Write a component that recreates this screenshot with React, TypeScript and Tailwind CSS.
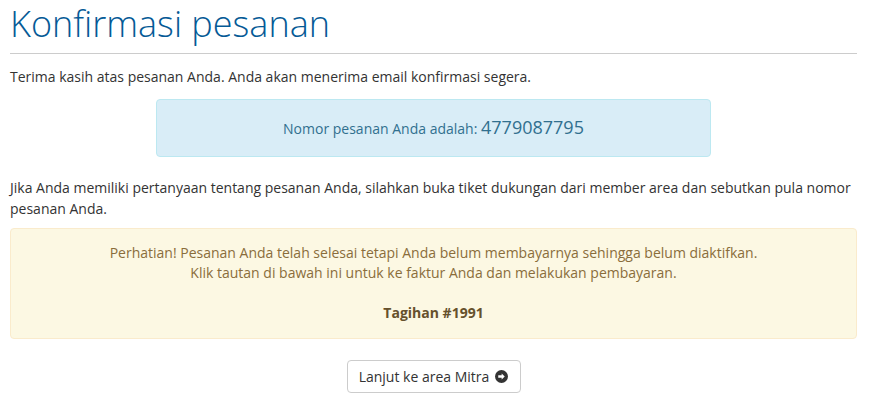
export default function App() {
  const orderNumber = '4779087795'
  const invoiceId = 1991

  return (
    <div className="min-h-screen bg-white pl-[10px] pr-[13px] font-['Open_Sans',sans-serif] text-[14px] text-[#333]">
      <h1 className="mt-[2px] border-b border-[#ccc] pb-[7px] text-[36px] font-[350] leading-[44px] text-[#055a96]">
        Konfirmasi pesanan
      </h1>

      <p className="mt-[13px] leading-[20px]">
        Terima kasih atas pesanan Anda. Anda akan menerima email konfirmasi segera.
      </p>

      <div className="mx-auto mt-[12px] flex h-[58px] w-[555px] items-center justify-center rounded border border-[#bce8f1] bg-[#d9edf7] text-[#31708f]">
        <span className="leading-[20px]">
          Nomor pesanan Anda adalah: <span className="text-[18px]">{orderNumber}</span>
        </span>
      </div>

      <p className="mt-[20px] leading-[21px]">
        Jika Anda memiliki pertanyaan tentang pesanan Anda, silahkan buka tiket dukungan dari member area dan sebutkan pula nomor pesanan Anda.
      </p>

      <div className="mt-[9px] rounded border border-[#faebcc] bg-[#fcf8e3] px-4 pb-[15px] pt-[14px] text-center leading-[20px] text-[#8a6d3b]">
        <p>Perhatian! Pesanan Anda telah selesai tetapi Anda belum membayarnya sehingga belum diaktifkan.</p>
        <p>Klik tautan di bawah ini untuk ke faktur Anda dan melakukan pembayaran.</p>
        <p className="mt-[20px] font-bold text-[#66512c]">Tagihan #{invoiceId}</p>
      </div>

      <div className="mt-[21px] flex justify-center">
        <button className="flex h-[33px] w-[174px] items-center justify-center gap-[6px] rounded border border-[#ccc] bg-white text-[14px] text-[#333]">
          Lanjut ke area Mitra
          <svg className="h-[13px] w-[13px]" viewBox="0 0 16 16">
            <circle cx="8" cy="8" r="8" fill="#333" />
            <path d="M4 6.6h4.2V4.2L12 8l-3.8 3.8V9.4H4z" fill="#fff" />
          </svg>
        </button>
      </div>
    </div>
  )
}
